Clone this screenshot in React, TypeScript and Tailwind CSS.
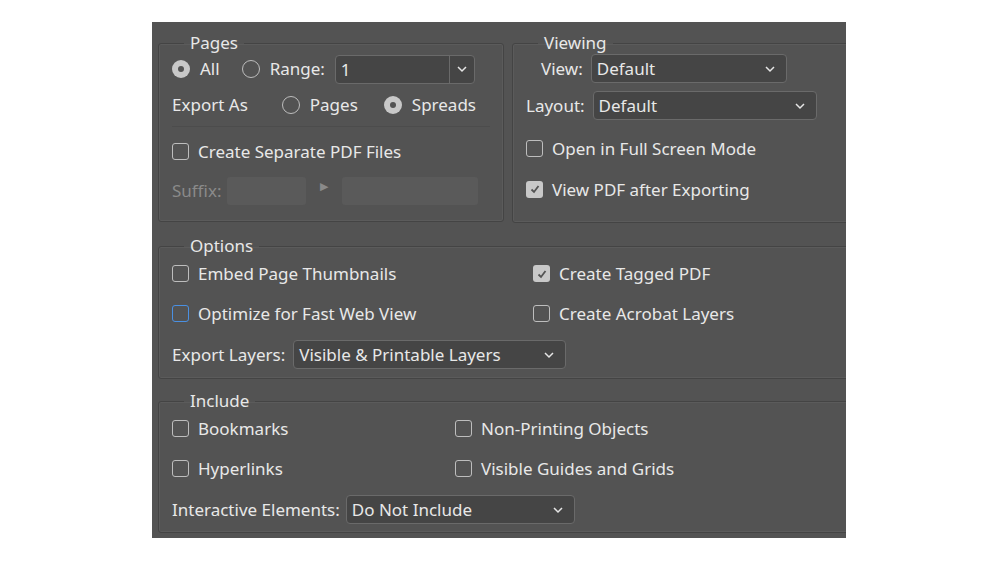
import React from "react";

const Chev = () => (
  <svg width="12" height="8" viewBox="0 0 12 8" className="shrink-0"><path d="M2 2l4 4 4-4" stroke="#e6e6e6" strokeWidth="1.5" fill="none" /></svg>
);

const Radio = ({ on }: { on?: boolean }) => (
  <span className={`inline-flex w-[18px] h-[18px] rounded-full items-center justify-center shrink-0 ${on ? "bg-[#c8c8c8]" : "border-[1.5px] border-[#bdbdbd]"}`}>
    {on && <span className="w-[6px] h-[6px] rounded-full bg-[#535353]" />}
  </span>
);

const Check = ({ on, blue }: { on?: boolean; blue?: boolean }) => (
  <span className={`inline-flex w-[17px] h-[17px] rounded-[3px] items-center justify-center shrink-0 ${on ? "bg-[#c8c8c8]" : blue ? "border-[1.5px] border-[#4a90e2]" : "border-[1.5px] border-[#bdbdbd]"}`}>
    {on && <svg width="12" height="12" viewBox="0 0 12 12"><path d="M2.5 6.5l2.5 2.5 4.5-6" stroke="#535353" strokeWidth="1.8" fill="none" /></svg>}
  </span>
);

const CB = ({ label, on, blue }: { label: string; on?: boolean; blue?: boolean }) => (
  <label className="flex items-center gap-[9px]"><Check on={on} blue={blue} /><span>{label}</span></label>
);

const Select = ({ value, w }: { value: string; w: string }) => (
  <div className={`flex items-center justify-between h-[29px] rounded-[4px] bg-[#454545] border border-[#6a6a6a] pl-[5px] pr-[10px] ${w}`}>
    <span>{value}</span><Chev />
  </div>
);

const Box = ({ title, className, children }: { title: string; className: string; children: React.ReactNode }) => (
  <fieldset className={`border border-[#444] rounded-[3px] shadow-[inset_0_0_0_1px_#5b5b5b] ${className}`}>
    <legend className="ml-[12px] px-[6px] leading-[20px]">{title}</legend>
    {children}
  </fieldset>
);

export default function App() {
  return (
    <div className="w-[1000px] h-[562px] bg-white pt-[22px] pl-[152px]" style={{ fontFamily: '"Noto Sans", sans-serif' }}>
      <div className="w-[694px] h-[516px] bg-[#535353] text-[#e8e8e8] text-[17px] pl-[6px] pt-[11px] overflow-hidden">
        <div className="flex gap-[8px] w-[720px]">
          <Box title="Pages" className="w-[346px] h-[189px] px-[13px]">
            <div className="flex items-center mt-[1px] h-[30px]">
              <label className="flex items-center gap-[10px]"><Radio on />All</label>
              <label className="flex items-center gap-[10px] ml-[22px]"><Radio />Range:</label>
              <div className="ml-[10px] flex h-[29px] w-[140px] rounded-[4px] bg-[#454545] border border-[#6a6a6a]">
                <span className="flex-1 pl-[5px] leading-[27px]">1</span>
                <span className="w-[25px] border-l border-[#6a6a6a] flex items-center justify-center"><Chev /></span>
              </div>
            </div>
            <div className="flex items-center h-[30px] mt-[6px]">
              <span>Export As</span>
              <label className="flex items-center gap-[10px] ml-[34px]"><Radio />Pages</label>
              <label className="flex items-center gap-[10px] ml-[26px]"><Radio on />Spreads</label>
            </div>
            <div className="border-t border-[#4c4c4c] mt-[6px] mb-[12px]" />
            <CB label="Create Separate PDF Files" />
            <div className="flex items-center mt-[12px] text-[#8a8a8a]">
              <span>Suffix:</span>
              <span className="ml-[6px] w-[79px] h-[28px] rounded-[3px] bg-[#5a5a5a]" />
              <span className="ml-[14px] mr-[14px] text-[11px] -mt-[8px]">▶</span>
              <span className="w-[136px] h-[28px] rounded-[3px] bg-[#5a5a5a]" />
            </div>
          </Box>
          <Box title="Viewing" className="w-[360px] h-[190px] px-[13px]">
            <div className="flex items-center gap-[8px] mt-[1px] pl-[15px]"><span>View:</span><Select value="Default" w="w-[196px]" /></div>
            <div className="flex items-center gap-[8px] mt-[8px]"><span>Layout:</span><Select value="Default" w="w-[224px]" /></div>
            <div className="mt-[16px]"><CB label="Open in Full Screen Mode" /></div>
            <div className="mt-[15px]"><CB label="View PDF after Exporting" on /></div>
          </Box>
        </div>
        <Box title="Options" className="mt-[13px] w-[720px] h-[143px] px-[13px]">
          <div className="grid grid-cols-[361px_1fr] gap-y-[14px] mt-[5px]">
            <CB label="Embed Page Thumbnails" />
            <CB label="Create Tagged PDF" on />
            <CB label="Optimize for Fast Web View" blue />
            <CB label="Create Acrobat Layers" />
          </div>
          <div className="flex items-center gap-[8px] mt-[14px]"><span>Export Layers:</span><Select value="Visible & Printable Layers" w="w-[273px]" /></div>
        </Box>
        <Box title="Include" className="mt-[12px] w-[720px] h-[142px] px-[13px]">
          <div className="grid grid-cols-[283px_1fr] gap-y-[14px] mt-[5px]">
            <CB label="Bookmarks" />
            <CB label="Non-Printing Objects" />
            <CB label="Hyperlinks" />
            <CB label="Visible Guides and Grids" />
          </div>
          <div className="flex items-center gap-[6px] mt-[14px]"><span>Interactive Elements:</span><Select value="Do Not Include" w="w-[229px]" /></div>
        </Box>
      </div>
    </div>
  );
}
